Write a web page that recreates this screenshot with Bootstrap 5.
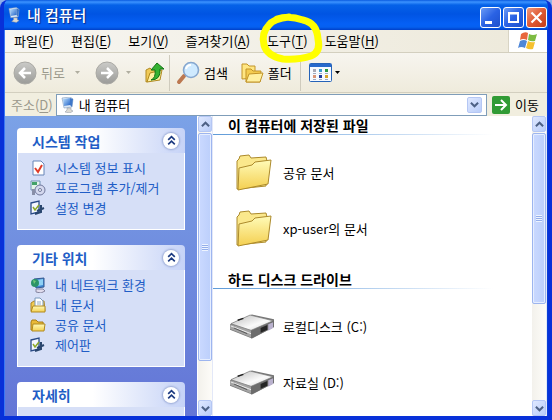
<!DOCTYPE html>
<html lang="ko">
<head>
<meta charset="utf-8">
<meta name="viewport" content="width=device-width, initial-scale=1">
<title>내 컴퓨터</title>
<link rel="stylesheet" href="https://cdn.jsdelivr.net/npm/bootstrap@5.3.0/dist/css/bootstrap.min.css">
<style>
body{font-family:"Noto Sans CJK KR",sans-serif;font-size:13px;line-height:20px;color:#000;background:#8fb0ea}
svg{display:block;flex:none}
button{border:0;padding:0;background:none;color:inherit;white-space:nowrap}
u{text-underline-offset:2px}
.xp-window{background:#0a3fd8;border:solid #0831d9;border-width:0 4px 4px;border-radius:8px 8px 0 0;box-shadow:inset 1px 0 #3a78f5}
.xp-title{height:30px;margin:0 -4px;padding:0 5px 0 8px;gap:6px;color:#fff;background:linear-gradient(#0a5be0 0,#3c93ff 2px,#0562e8 5px,#0054e3 14px,#0560f5 24px,#0560f0 27px,#0040c8 30px);border-radius:8px 8px 0 0}
.xp-title h1{font-size:15px;line-height:20px;font-weight:500;text-shadow:1px 1px 1px #0a2a88}
.cap-group{gap:2px}
.cap-btn{width:21px;height:21px;border:1px solid #fff;border-radius:3px;background:linear-gradient(135deg,#6b9bf5,#2a62e4 50%,#1d50cc)}
.cap-close{background:linear-gradient(135deg,#f0997c,#e05a34 50%,#c43d18)}
.xp-client{margin:0 1px;background:#fff}
.menu-row{height:23px;background:linear-gradient(90deg,#f7f6f2,#ede9da);border-bottom:1px solid #d3cfbf}
.menu-row button{padding:0 8px 0 9px}
.flag-box{width:39px;background:#fff;border-left:1px solid #d8d4c4}
.tool-row{height:40px;background:linear-gradient(#f7f5ef,#efebdc);border-bottom:1px solid #d3cfbf}
.muted-text{color:#9b998c}
.tool-sep{width:1px;height:36px;background:#cfcbbd}
.addr-row{height:23px;background:#f1eedf}
.addr-row label{padding:0 3px 0 6px}
.addr-box{height:22px;border:1px solid #7f9db9;background:#fff}
.addr-box input{border:0;outline:0;padding:0;min-width:0;height:20px;color:#000;background:none}
.sb-btn{width:15px;height:16px;border:1px solid #b5c7f4;border-radius:2px;background:linear-gradient(135deg,#dfe8ff,#b9cdf9);flex:none}
.side{width:192px;padding:12px 12px 0;background:linear-gradient(#7ba2e7,#6375d6)}
.pane{margin-bottom:15px;flex:none}
.pane-head{height:25px;padding:0 6px 0 15px;border-radius:4px 4px 0 0;background:linear-gradient(90deg,#fff 45%,#c6d3f7)}
.pane-head h2{font-size:14px;line-height:20px;font-weight:700;color:#215dc6}
.pane-list{padding:5px 0 11px 12px;border:1px solid #fff;border-top:0;background:#d6dff7}
.pane-list a{color:#215dc6;height:20px;gap:9px}
.chev{width:16px;height:16px;border-radius:50%;background:#fff;box-shadow:0 0 2px 1px #98a8d4}
.scroller{width:16px;background:linear-gradient(90deg,#f3f1ec,#fdfcf8);border-left:1px solid #fff;border-right:1px solid #e3e8f8}
.scroller .sb-btn{width:14px}
.thumb{width:14px;border:1px solid #9db5ef;border-radius:2px;background:linear-gradient(90deg,#cad9ff,#bccffb);margin-top:1px;box-shadow:inset 0 0 0 1px #e6eeff}
.thumb-left{flex:0 0 76%}
.thumb-right{flex:0 0 57%}
.grip{width:6px;height:7px;background:repeating-linear-gradient(#eef4ff 0 1px,#94aeea 1px 2px)}
.group-head{font-size:14px;line-height:18px;font-weight:700;padding-left:15px;flex:none}
.group-next{padding-top:13px}
.group-rule{height:1px;width:88%;background:linear-gradient(90deg,#5f9bd8,#a9c9ec 50%,#fff);margin-bottom:10px;flex:none}
.entry{height:56px;gap:9px;padding-left:17px;color:#000;flex:none}
.entry svg{width:44px}
.marker{position:absolute;left:249px;top:8px;pointer-events:none}
</style>
<script src="https://cdn.jsdelivr.net/npm/bootstrap@5.3.0/dist/js/bootstrap.bundle.min.js"></script>
</head>
<body>
<svg width="0" height="0" class="position-absolute" aria-hidden="true">
<defs>
<linearGradient id="gf" x1="0" y1="0" x2="0" y2="1"><stop offset="0" stop-color="#fffbb8"/><stop offset="1" stop-color="#f4cf50"/></linearGradient>
<linearGradient id="gs" x1="0" y1="0" x2="1" y2="1"><stop offset="0" stop-color="#bfe2ff"/><stop offset="1" stop-color="#2565c8"/></linearGradient>
<linearGradient id="gg" x1="0" y1="0" x2="0" y2="1"><stop offset="0" stop-color="#cbcbc8"/><stop offset="1" stop-color="#9b9b98"/></linearGradient>
<linearGradient id="gd" x1="0" y1="0" x2="1" y2="1"><stop offset="0" stop-color="#bbb"/><stop offset=".6" stop-color="#fafafa"/><stop offset="1" stop-color="#ccc"/></linearGradient>
<symbol id="pc" viewBox="0 0 14 16"><path d="M1 1 9 0l3 2-1 8-8 1z" fill="#dce8f4" stroke="#7f9cc0" stroke-width=".6"/><path d="m2 2 7-1 0 7-6 1z" fill="url(#gs)"/><path d="m9 1 3 1-1 8-2-2z" fill="#3f77c8"/><path d="M6 11h4v2l2 1-3 2-5-1 2-2z" fill="#dcdad2" stroke="#8b93a0" stroke-width=".5"/></symbol>
<symbol id="upchev" viewBox="0 0 10 10"><path d="m1 7 4-4 4 4" fill="none" stroke="#4d6185" stroke-width="2.2"/></symbol>
<symbol id="dnchev" viewBox="0 0 10 10"><path d="m1 3 4 4 4-4" fill="none" stroke="#4d6185" stroke-width="2.2"/></symbol>
<symbol id="dbl" viewBox="0 0 10 10"><path d="m2 4.5 3-3 3 3M2 8.5l3-3 3 3" fill="none" stroke="#1c3a80" stroke-width="1.5"/></symbol>
<symbol id="folder" viewBox="0 0 44 38"><path d="M7 35V7l2-2 1-3 9-1 2 3 15-1 1 4-1 25z" fill="#fbe88c" stroke="#ac8a2c"/><path d="M8 36 9 14l13-3 3-3 16-2-3 24z" fill="url(#gf)" stroke="#ac8a2c"/></symbol>
<symbol id="drive" viewBox="0 0 46 26"><path d="M0 10v6l23 9 23-12V5L23 0z" fill="#777"/><path d="M0 10v5l22 9v-8z" fill="#a4a4a4"/><path d="M22 17v8l24-12V6z" fill="#6c6c6c"/><path d="M1 9.500 21 .5l24 6-23 10z" fill="url(#gd)" stroke="#777" stroke-width=".7"/><path d="m1 12 21 8" stroke="#eee"/><path d="m32 14 7-3v5l-7 3z" fill="#252525"/><path d="m40 10 5-2v6l-5 3z" fill="#bab2ce"/><path d="m8 6 6-2" stroke="#222" stroke-width="1.5"/><path d="m4 14 14 6" stroke="#555"/></symbol>
<symbol id="panel" viewBox="0 0 16 16"><path d="M1 3 9 1v11l-8 2z" fill="#f5f8ff" stroke="#294a86" stroke-width="1.3"/><path d="m3 7 2 3 4-5" fill="none" stroke="#8ba827" stroke-width="1.5"/><path d="M7 11 14 8M5 14l6-2V5" fill="none" stroke="#29466e" stroke-width="2"/></symbol>
<symbol id="sfolder" viewBox="0 0 16 16"><path d="M1 13V5l1-2h4l2 2h5l1 8z" fill="#e9b938" stroke="#a87c16"/><path d="M2 14 3 7h12l-1 7z" fill="url(#gf)" stroke="#b18a20"/></symbol>
</defs>
</svg>
<div class="xp-window d-flex flex-column vh-100 position-relative overflow-hidden">
  <header class="xp-title d-flex align-items-center flex-shrink-0">
    <svg width="13" height="16"><use href="#pc"/></svg>
    <h1 class="mb-0 flex-grow-1">내 컴퓨터</h1>
    <div class="cap-group d-flex mt-1">
      <button class="cap-btn" aria-label="최소화"><svg width="19" height="19"><path d="M4 13h7v3H4z" fill="#fff"/></svg></button>
      <button class="cap-btn" aria-label="최대화"><svg width="19" height="19"><path d="M5 5h9v9H5zM5 5.5h9" fill="none" stroke="#fff" stroke-width="2"/></svg></button>
      <button class="cap-btn cap-close" aria-label="닫기"><svg width="19" height="19"><path d="m4.500 4.500 10 10m0-10-10 10" stroke="#fff" stroke-width="2.200"/></svg></button>
    </div>
  </header>
  <div class="xp-client d-flex flex-column flex-grow-1 overflow-hidden">
    <nav class="menu-row d-flex flex-shrink-0" aria-label="메뉴">
      <button>파일(<u>F</u>)</button><button>편집(<u>E</u>)</button><button>보기(<u>V</u>)</button><button>즐겨찾기(<u>A</u>)</button><button>도구(<u>T</u>)</button><button>도움말(<u>H</u>)</button>
      <div class="flag-box ms-auto d-flex align-items-center justify-content-center">
        <svg width="20" height="18" viewBox="0 0 20 18"><path d="M3 2q4-3 7-1L9 8q-4-2-7 0z" fill="#e8663c"/><path d="M11 2q4 2 8 0l-2 7q-4 1-7-1z" fill="#7dbb42"/><path d="M2 9q4-2 7 0l-2 7q-4-2-7 0z" fill="#4f87d8"/><path d="M10 9q3 2 7 1l-2 7q-4 1-7-1z" fill="#f6c030"/></svg>
      </div>
    </nav>
    <div class="tool-row d-flex align-items-center flex-shrink-0 ps-2">
      <button class="d-flex align-items-center muted-text"><svg width="24" height="24"><circle cx="12" cy="12" r="11" fill="url(#gg)" stroke="#aaa9a4"/><path d="M18 12H7m5-5-5 5 5 5" fill="none" stroke="#fff" stroke-width="2.500"/></svg><span class="ms-1">뒤로</span></button>
      <svg class="ms-2 me-2" width="10" height="6"><path d="M2 1h5L4.500 4z" fill="#b0aea0"/></svg>
      <button class="ms-1" aria-label="앞으로"><svg width="24" height="24"><circle cx="12" cy="12" r="11" fill="url(#gg)" stroke="#aaa9a4"/><path d="M6 12h11m-5-5 5 5-5 5" fill="none" stroke="#fff" stroke-width="2.500"/></svg></button>
      <svg class="ms-1 me-2" width="14" height="6"><path d="M3 1h5L5.500 4z" fill="#b0aea0"/></svg>
      <button aria-label="위로"><svg width="20" height="22"><path d="M1 20V8l4-2 2 2 5-1v10z" fill="#f0ca58" stroke="#b18a20"/><path d="m2 20 3-9 12-3-2 10z" fill="#fff0a0" stroke="#b18a20"/><path d="M6 18q5-2 4-10H6l6-7 7 6h-4q1 11-9 11z" fill="#35b233" stroke="#137314"/></svg></button>
      <div class="tool-sep ms-1 me-1"></div>
      <button class="d-flex align-items-center"><svg width="26" height="24"><path d="m5 21 5-6" stroke="#bc7850" stroke-width="4" stroke-linecap="round"/><circle cx="17" cy="9" r="7.500" fill="#cfeaff" stroke="#86a7cf" stroke-width="1.600"/><path d="M12 8q1-4 5-4" fill="none" stroke="#fff" stroke-width="2"/></svg><span class="ms-1">검색</span></button>
      <button class="d-flex align-items-center ms-2 ps-1"><svg width="24" height="22"><path d="M2 17V2h5l2 2h6v12z" fill="#ffe682" stroke="#c29428"/><path d="M6 20V7h5l2 2h8l-1 11z" fill="#f4cc50" stroke="#c29428"/><path d="m6 20 3-8 14-1-3 9z" fill="#fff0a0" stroke="#c29428"/></svg><span class="ms-1">폴더</span></button>
      <div class="tool-sep ms-2 me-2"></div>
      <button class="d-flex align-items-center" aria-label="보기"><svg width="24" height="20"><rect x=".5" y=".5" width="22" height="18" rx="1" fill="#f6faff" stroke="#2663b8"/><path d="M1 1h21v3H1z" fill="#2769cc"/><path d="M4 6h3v3H4z" fill="#a9a9b4"/><path d="M4 12h3v3H4z" fill="#d99678"/><path d="M10 6h3v3h-3z" fill="#3c9cd0"/><path d="M10 12h3v3h-3z" fill="#203c9c"/><path d="M16 6h3v3h-3z" fill="#2b9a44"/><path d="M16 12h3v3h-3z" fill="#d7a428"/><path d="M4 10.500h3m3 0h3m3 0h3M4 16.500h3m3 0h3m3 0h3" stroke="#9daac0"/></svg><svg width="9" height="6"><path d="M2 1h5L4.500 4z" fill="#000"/></svg></button>
    </div>
    <div class="addr-row d-flex align-items-center flex-shrink-0 pe-2">
      <label for="addr" class="muted-text text-nowrap">주소(<u>D</u>)</label>
      <div class="addr-box d-flex align-items-center flex-grow-1">
        <svg class="ms-1 me-1" width="14" height="16"><use href="#pc"/></svg>
        <input id="addr" type="text" value="내 컴퓨터" class="flex-grow-1">
        <button class="sb-btn d-flex align-items-center justify-content-center me-1" aria-label="목록"><svg width="9" height="9"><use href="#dnchev"/></svg></button>
      </div>
      <button class="d-flex align-items-center ms-1"><svg width="20" height="18"><rect x="1" width="18" height="18" rx="2" fill="#319b35"/><path d="M4 9h10m-4-5 5 5-5 5" fill="none" stroke="#fff" stroke-width="2"/></svg><span class="ms-1">이동</span></button>
    </div>
    <div class="d-flex flex-grow-1 overflow-hidden">
      <aside class="side d-flex flex-column flex-shrink-0 overflow-hidden">
        <section class="pane">
          <div class="pane-head d-flex align-items-center justify-content-between"><h2 class="mb-0">시스템 작업</h2><button class="chev d-flex align-items-center justify-content-center" aria-label="접기"><svg width="11" height="11"><use href="#dbl"/></svg></button></div>
          <div class="pane-list">
            <a href="#" class="d-flex align-items-center text-decoration-none"><svg width="16" height="16"><path d="M3 1h8l3 3v11H3z" fill="#fff" stroke="#6685b8"/><path d="m5 8 3 4 4-7" fill="none" stroke="#df3c28" stroke-width="2"/></svg>시스템 정보 표시</a>
            <a href="#" class="d-flex align-items-center text-decoration-none"><svg width="16" height="16"><path d="M1 1h9v9H1z" fill="#e4f4e8" stroke="#7092b4"/><path d="M2 2h5v3H2z" fill="#43a268"/><circle cx="10" cy="10" r="5" fill="#d4d8ee" stroke="#70789b"/><circle cx="10" cy="10" r="1.500" fill="#fff" stroke="#70789b"/><path d="M2 9h3v6H2z" fill="#898fa8"/></svg>프로그램 추가/제거</a>
            <a href="#" class="d-flex align-items-center text-decoration-none"><svg width="16" height="16"><use href="#panel"/></svg>설정 변경</a>
          </div>
        </section>
        <section class="pane">
          <div class="pane-head d-flex align-items-center justify-content-between"><h2 class="mb-0">기타 위치</h2><button class="chev d-flex align-items-center justify-content-center" aria-label="접기"><svg width="11" height="11"><use href="#dbl"/></svg></button></div>
          <div class="pane-list">
            <a href="#" class="d-flex align-items-center text-decoration-none"><svg width="16" height="16"><path d="m4 2 10-1v9l-8 1z" fill="#3c87d4" stroke="#34588f"/><path d="m7 3 6-1v6l-5 1z" fill="#8ed0f4"/><circle cx="5" cy="6" r="4" fill="#2c9468"/><path d="m3 3 3 1-2 3z" fill="#76c977"/><path d="M6 12h7l2 2-4 2-5-1z" fill="#e0dced" stroke="#8585a0"/></svg>내 네트워크 환경</a>
            <a href="#" class="d-flex align-items-center text-decoration-none"><svg width="16" height="16"><path d="M1 14V6l3-2h10l1 10z" fill="#f1ca50" stroke="#ac8424"/><path d="M5 1h5l3 3v8H5z" fill="#fff" stroke="#7898bb"/><path d="M7 5h4M7 7h4" stroke="#91abc7"/><path d="M1 15 3 9h12v6z" fill="url(#gf)" stroke="#b18a20"/></svg>내 문서</a>
            <a href="#" class="d-flex align-items-center text-decoration-none"><svg width="16" height="16"><use href="#sfolder"/></svg>공유 문서</a>
            <a href="#" class="d-flex align-items-center text-decoration-none"><svg width="16" height="16"><use href="#panel"/></svg>제어판</a>
          </div>
        </section>
        <section class="pane">
          <div class="pane-head d-flex align-items-center justify-content-between"><h2 class="mb-0">자세히</h2><button class="chev d-flex align-items-center justify-content-center" aria-label="접기"><svg width="11" height="11"><use href="#dbl"/></svg></button></div>
          <div class="pane-list"></div>
        </section>
      </aside>
      <div class="scroller d-flex flex-column flex-shrink-0">
        <button class="sb-btn d-flex align-items-center justify-content-center" aria-label="위로 스크롤"><svg width="9" height="9"><use href="#upchev"/></svg></button>
        <div class="thumb thumb-left d-flex align-items-center justify-content-center"><div class="grip"></div></div>
        <button class="sb-btn d-flex align-items-center justify-content-center mt-auto" aria-label="아래로 스크롤"><svg width="9" height="9"><use href="#dnchev"/></svg></button>
      </div>
      <main class="flex-grow-1 d-flex flex-column overflow-hidden">
        <h2 class="group-head mb-0">이 컴퓨터에 저장된 파일</h2>
        <div class="group-rule"></div>
        <a href="#" class="entry d-flex align-items-center text-decoration-none"><svg height="38"><use href="#folder"/></svg>공유 문서</a>
        <a href="#" class="entry d-flex align-items-center text-decoration-none"><svg height="38"><use href="#folder"/></svg>xp-user의 문서</a>
        <h2 class="group-head group-next mb-0">하드 디스크 드라이브</h2>
        <div class="group-rule"></div>
        <a href="#" class="entry d-flex align-items-center text-decoration-none"><svg height="26"><use href="#drive"/></svg>로컬디스크 (C:)</a>
        <a href="#" class="entry d-flex align-items-center text-decoration-none"><svg height="26"><use href="#drive"/></svg>자료실 (D:)</a>
      </main>
      <div class="scroller d-flex flex-column flex-shrink-0">
        <button class="sb-btn d-flex align-items-center justify-content-center" aria-label="위로 스크롤"><svg width="9" height="9"><use href="#upchev"/></svg></button>
        <div class="thumb thumb-right d-flex align-items-center justify-content-center"><div class="grip"></div></div>
        <button class="sb-btn d-flex align-items-center justify-content-center mt-auto" aria-label="아래로 스크롤"><svg width="9" height="9"><use href="#dnchev"/></svg></button>
      </div>
    </div>
  </div>
  <svg class="marker" width="74" height="60"><path d="M24 11Q36 7 50 12Q64 15 65 31Q68 44 58 48Q46 52 30 51Q14 48 11 37Q8 25 16 17Q20 11 36 9" fill="none" stroke="#ff0" stroke-width="7" stroke-linecap="round" stroke-linejoin="round"/></svg>
</div>
</body>
</html>
